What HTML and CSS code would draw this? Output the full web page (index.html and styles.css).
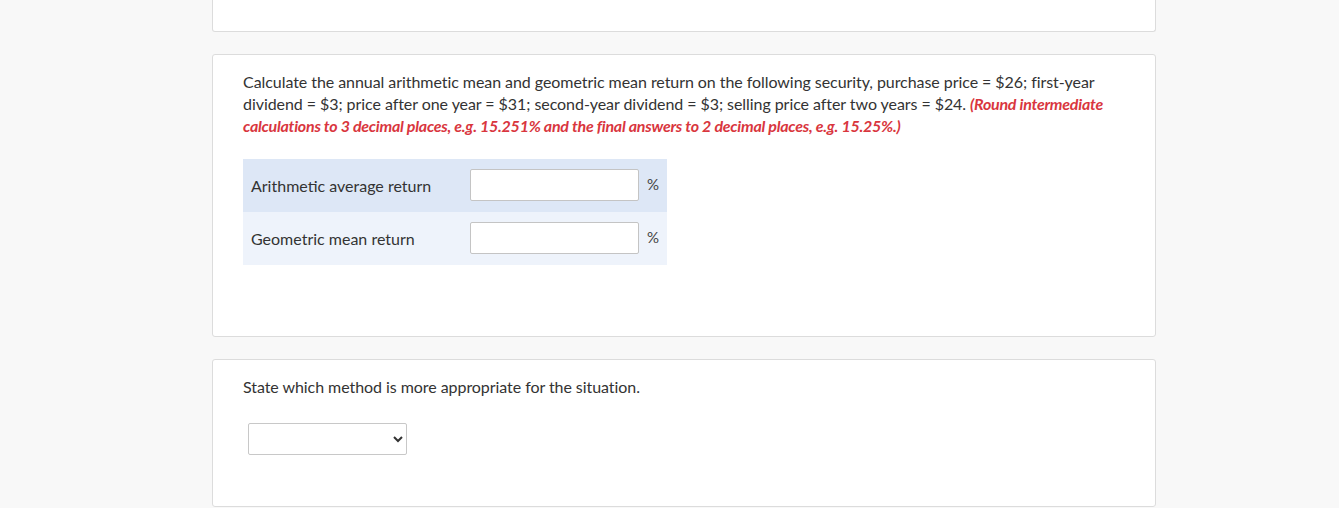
FILE: index.html
```html
<!DOCTYPE html>
<html lang="en">
<head>
<meta charset="utf-8">
<title>Question</title>
<link rel="stylesheet" href="styles.css">
</head>
<body>
<main class="page">
  <section class="card card-cut"></section>
  <section class="card card-question">
    <p class="prompt">Calculate the annual arithmetic mean and geometric mean return on the following security, purchase price = $26; first-year dividend = $3; price after one year = $31; second-year dividend = $3; selling price after two years = $24. <em class="hint">(Round intermediate calculations to 3 decimal places, e.g. 15.251% and the final answers to 2 decimal places, e.g. 15.25%.)</em></p>
    <div class="answers">
      <div class="row row-a">
        <span class="label">Arithmetic average return</span>
        <input class="field" type="text">
        <span class="unit">%</span>
      </div>
      <div class="row row-b">
        <span class="label">Geometric mean return</span>
        <input class="field" type="text">
        <span class="unit">%</span>
      </div>
    </div>
  </section>
  <section class="card card-select">
    <p class="prompt">State which method is more appropriate for the situation.</p>
    <select class="choice">
      <option></option>
      <option>Arithmetic mean</option>
      <option>Geometric mean</option>
    </select>
  </section>
</main>
</body>
</html>
```

FILE: styles.css
```css
html, body {
  margin: 0;
  padding: 0;
  background: #f8f8f8;
}

body {
  font-family: Lato, "Open Sans", "Liberation Sans", sans-serif;
  font-size: 16px;
  line-height: 22px;
  color: #333;
}

.page {
  width: 944px;
  margin-left: 212px;
  display: flex;
  flex-direction: column;
  gap: 22px;
}

.card {
  background: #fff;
  border: 1px solid #dcdcdc;
  border-radius: 3px;
  box-sizing: border-box;
}

.card-cut {
  height: 32px;
  border-top: 0;
  border-radius: 0 0 3px 3px;
}

.card-question {
  height: 283px;
  padding: 16px 30px 0 30px;
}

.card-select {
  height: 148px;
  padding: 16px 30px 0 30px;
}

.prompt {
  margin: 0;
  letter-spacing: -0.06px;
}

.hint {
  color: #d9363e;
  font-weight: 700;
  font-style: italic;
  letter-spacing: -0.25px;
}

.answers {
  margin-top: 22px;
  width: 424px;
}

.row {
  height: 53px;
  display: flex;
  align-items: center;
}

.row-a {
  background: #dde7f6;
}

.row-b {
  background: #eef3fb;
}

.label {
  width: 219px;
  padding-left: 8px;
}

.field {
  width: 169px;
  height: 32px;
  box-sizing: border-box;
  margin: -2px 8px 0 0;
  border: 1px solid #c4c4c4;
  border-radius: 2px;
  background: #fff;
  font: inherit;
}

.unit {
  font-size: 15px;
  color: #444;
  margin-top: -4px;
}

.choice {
  display: block;
  margin: 25px 0 0 5px;
  width: 159px;
  height: 32px;
  box-sizing: border-box;
  border: 1px solid #c8c8c8;
  border-radius: 2px;
  background: #fff;
  font: inherit;
  color: #333;
}
```
